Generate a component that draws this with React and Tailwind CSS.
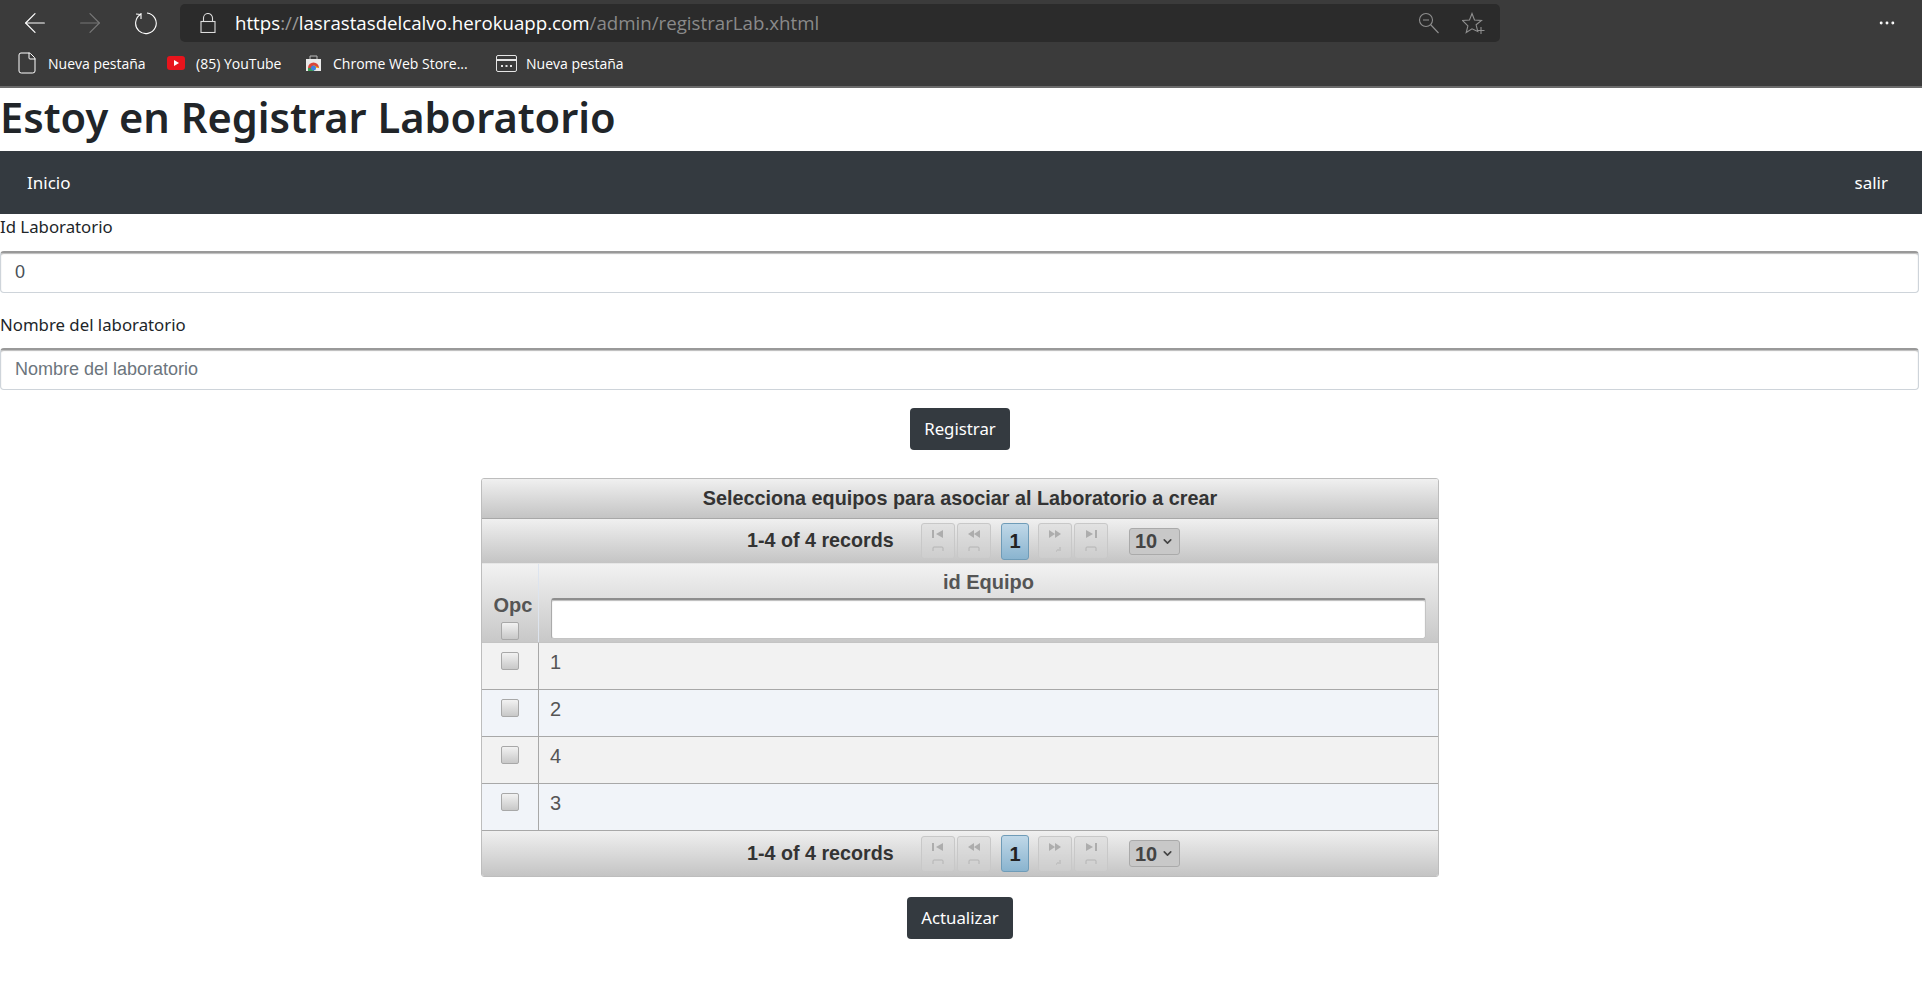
import React from 'react';
import { ArrowLeft, ArrowRight, File, MoreHorizontal, ChevronDown } from 'lucide-react';

const rows = ['1', '2', '4', '3'];

function Bookmark({ icon, label, className }) {
  return (
    <div className={`flex items-center ${className}`}>
      {icon}
      <span>{label}</span>
    </div>
  );
}

function Check({ className = '' }) {
  return (
    <div className={`h-[18px] w-[18px] rounded-[2px] border border-[#a8a8a8] bg-gradient-to-b from-[#f2f2f2] to-[#c8c8c8] ${className}`} />
  );
}

// jsf paginator button icons, they are faded out in the picture
function PageBtn({ top, bottom, className = '' }) {
  return (
    <div className={`flex h-[36px] w-[34px] flex-col items-center justify-between rounded-[3px] border border-[#c8c8c8] bg-[#d4d4d4]/40 py-[6px] ${className}`}>
      <svg width="14" height="8" viewBox="0 0 14 8" className="text-[#adadad]" fill="currentColor">
        <path d={top} />
      </svg>
      <svg width="12" height="6" viewBox="0 0 12 6" className="text-[#b4b4b4]" fill="none" stroke="currentColor">
        <path d={bottom} />
      </svg>
    </div>
  );
}

function Paginator({ className = '' }) {
  return (
    <div className={`relative flex items-center bg-gradient-to-b from-[#f0f0f0] to-[#c4c4c4] font-['Liberation_Sans',sans-serif] ${className}`}>
      <span className="ml-[265px] w-[174px] text-[19.7px] font-bold text-[#333]">1-4 of 4 records</span>
      <PageBtn top="M1 0h2v8H1zM12 0v8L5 4z" bottom="M1 5V2q0-1 1-1h8q1 0 1 1v3" />
      <PageBtn top="M7 0v8L1 4zM13 0v8L7 4z" bottom="M1 5V2q0-1 1-1h8q1 0 1 1v3" className="ml-[2px]" />
      <div className="ml-[10px] flex h-[37px] w-[28px] items-center justify-center rounded-[3px] border border-[#6f9cb8] bg-gradient-to-b from-[#c0d8e8] to-[#8ab4cf] text-[20px] font-bold text-[#222]">
        1
      </div>
      <PageBtn top="M1 0v8l6-4zM7 0v8l6-4z" bottom="M7 5h1M9 5V3M11 5V1" className="ml-[9px]" />
      <PageBtn top="M2 0v8l7-4zM11 0h2v8h-2z" bottom="M1 5V2q0-1 1-1h8q1 0 1 1v3" className="ml-[2px]" />
      <div className="ml-[21px] flex h-[27px] w-[51px] items-center justify-center gap-[4px] rounded-[3px] border border-[#aaa] bg-[#c8c8c8] text-[20px] font-bold text-[#444]">
        10 <ChevronDown size={13} strokeWidth={3} />
      </div>
    </div>
  );
}

export default function App() {
  return (
    <div className="min-h-[992px] bg-white font-['Noto_Sans',sans-serif] text-[#212529]">
      {/* browser bar */}
      <div className="h-[88px] border-b-2 border-[#6b6b6b] bg-[#3b3b3b] text-white">
        <div className="flex h-[46px] items-center">
          <div className="flex w-[180px] items-center pl-[19px] text-white">
            <ArrowLeft size={32} strokeWidth={0.9} />
            <ArrowRight size={32} strokeWidth={0.9} className="ml-[23px] text-[#777]" />
            <svg width="24" height="24" viewBox="0 0 24 24" fill="none" stroke="currentColor" strokeWidth="1.1" className="ml-[27px]">
              <path d="M8 3.200A10.300 10.300 0 1 0 14 2" />
              <path d="M8 2v6h0M3 3l5 .5" />
            </svg>
          </div>
          <div className="flex h-[38px] w-[1320px] items-center rounded-[5px] bg-[#2b2b2b] pr-[14px] font-['Open_Sans',sans-serif] text-[18.7px]">
            <svg width="16" height="20" viewBox="0 0 16 20" fill="none" stroke="#ddd" strokeWidth="1.1" className="ml-[20px]">
              <rect x="1" y="8.500" width="14" height="11" />
              <path d="M3.500 8.500V5a4.500 4.500 0 0 1 9 0v3.500" />
            </svg>
            <span className="ml-[19px] text-white">
              https<span className="text-[#999]">://</span>lasrastasdelcalvo.herokuapp.com<span className="text-[#8a8a8a]">/admin/registrarLab.xhtml</span>
            </span>
            <div className="ml-auto flex items-center gap-[22px] text-[#8f8f8f]">
              <svg width="22" height="22" viewBox="0 0 22 22" fill="none" stroke="currentColor" strokeWidth="1.1">
                <circle cx="8" cy="8" r="6.500" />
                <path d="M5 8h6M12.500 12.500l8 8.500" />
              </svg>
              <svg width="24" height="22" viewBox="0 0 24 22" fill="none" stroke="currentColor" strokeWidth="1.1">
                <path d="M10 1.500l2.500 6.500 7 .4-5.400 4.400 1.700 6.700L10 16.800l-5.800 3.700 1.700-6.700L.5 8.400l7-.4z" />
                <path d="M19 15v7M15.500 18.500h7" />
              </svg>
            </div>
          </div>
          <MoreHorizontal size={20} strokeWidth={1.5} className="ml-auto mr-[25px]" />
        </div>
        <div className="flex h-[34px] items-center pl-[15px] font-['Open_Sans',sans-serif] text-[14px]">
          <Bookmark icon={<File size={24} strokeWidth={1} />} label="Nueva pestaña" className="w-[152px] gap-[9px]" />
          <Bookmark
            icon={
              <svg width="18" height="14" viewBox="0 0 18 14">
                <rect width="18" height="14" rx="3" fill="#e8141c" />
                <path d="M7 4l5 3-5 3z" fill="#fff" />
              </svg>
            }
            label="(85) YouTube"
            className="w-[138px] gap-[11px]"
          />
          <Bookmark
            icon={
              <svg width="17" height="18" viewBox="0 0 17 18">
                <path d="M1 5h15v12H1z" fill="#e9e9e9" />
                <path d="M5 5V2h7v3" fill="none" stroke="#bbb" />
                <path d="M3 14a5.500 5.500 0 0 1 11 0z" fill="#d9453a" />
                <path d="M8.500 14V11l5.500 3z" fill="#f5c518" />
                <path d="M3 14h6v3H3z" fill="#3a9b52" />
                <circle cx="8.500" cy="14" r="2.500" fill="#3f7fe0" />
              </svg>
            }
            label="Chrome Web Store..."
            className="w-[191px] gap-[11px]"
          />
          <Bookmark
            icon={
              <svg width="21" height="17" viewBox="0 0 21 17" fill="none" stroke="#e5e5e5">
                <rect x="0.500" y="0.500" width="20" height="16" rx="1.500" />
                <path d="M1 5h19M5 11h2M9.500 11h2M14 11h2" strokeWidth="2" />
              </svg>
            }
            label="Nueva pestaña"
            className="gap-[9px]"
          />
        </div>
      </div>

      <h1 className="flex h-[63px] items-center pb-[4px] text-[41.6px] font-semibold leading-none">Estoy en Registrar Laboratorio</h1>

      <nav className="flex h-[63px] items-center justify-between bg-[#343a40] pl-[27px] pr-[34px] text-[17px] text-white">
        <span>Inicio</span>
        <span>salir</span>
      </nav>

      <label className="block h-[37px] text-[16.800px] leading-[26px]">Id Laboratorio</label>
      <input
        readOnly
        value="0"
        className="block h-[42px] w-[1919px] rounded-[4px] border border-[#ced4da] border-t-2 border-t-[#999] bg-white px-[14px] font-['Liberation_Sans',sans-serif] text-[18px] text-[#495057] shadow-[inset_0_1px_1px_#bbb]"
      />
      <label className="mt-[20px] block h-[35px] text-[16.800px] leading-[24px]">Nombre del laboratorio</label>
      <input
        readOnly
        placeholder="Nombre del laboratorio"
        className="block h-[42px] w-[1919px] rounded-[4px] border border-[#ced4da] border-t-2 border-t-[#999] bg-white px-[14px] font-['Liberation_Sans',sans-serif] text-[18px] text-[#495057] shadow-[inset_0_1px_1px_#bbb] placeholder:text-[#6c757d]"
      />

      <div className="mt-[18px] flex justify-center pr-[2px]">
        <button className="h-[42px] w-[100px] rounded-[4px] bg-[#343a40] text-[16.800px] text-white">Registrar</button>
      </div>

      {/* data table */}
      <div className="ml-[481px] mt-[28px] w-[958px] overflow-hidden rounded-[3px] border border-[#bdbdbd] font-['Liberation_Sans',sans-serif]">
        <div className="flex h-[40px] items-center justify-center border-b border-[#a8a8a8] bg-gradient-to-b from-[#f0f0f0] to-[#c4c4c4] text-[19.800px] font-bold text-[#333]">
          Selecciona equipos para asociar al Laboratorio a crear
        </div>
        <Paginator className="h-[44px]" />
        <div className="flex h-[80px] border-y border-y-[#e6e6e6] border-b-[#c4c4c4] bg-gradient-to-b from-[#f2f2f2] to-[#c8c8c8] text-[#555]">
          <div className="flex w-[57px] flex-col items-center justify-end border-r border-[#dde4ee] pb-[2px]">
            <span className="mb-[5px] ml-[6px] text-[20px] font-bold leading-[24px]">Opc</span>
            <Check />
          </div>
          <div className="flex flex-1 flex-col items-center pt-[6px]">
            <span className="text-[20px] font-bold leading-[24px]">id Equipo</span>
            <div className="mt-[4px] h-[41px] w-[875px] rounded-[3px] border border-[#c4c4c4] border-t-2 border-t-[#8e8e8e] border-l-[#aaa] bg-white shadow-[inset_0_1px_1px_#bbb]" />
          </div>
        </div>
        {rows.map((id, i) => (
          <div key={id} className={`flex h-[47px] border-b border-[#a8a8a8] ${i % 2 === 0 ? 'bg-[#f2f2f2]' : 'bg-[#f1f4f9]'}`}>
            <div className="flex w-[57px] justify-center border-r border-[#a8a8a8] pt-[9px]">
              <Check />
            </div>
            <div className="pl-[11px] pt-[7px] text-[20px] leading-[24px] text-[#555]">{id}</div>
          </div>
        ))}
        <Paginator className="h-[45px]" />
      </div>

      <div className="mt-[20px] flex justify-center pr-[2px]">
        <button className="h-[42px] w-[106px] rounded-[4px] bg-[#343a40] text-[16.800px] text-white">Actualizar</button>
      </div>
    </div>
  );
}
